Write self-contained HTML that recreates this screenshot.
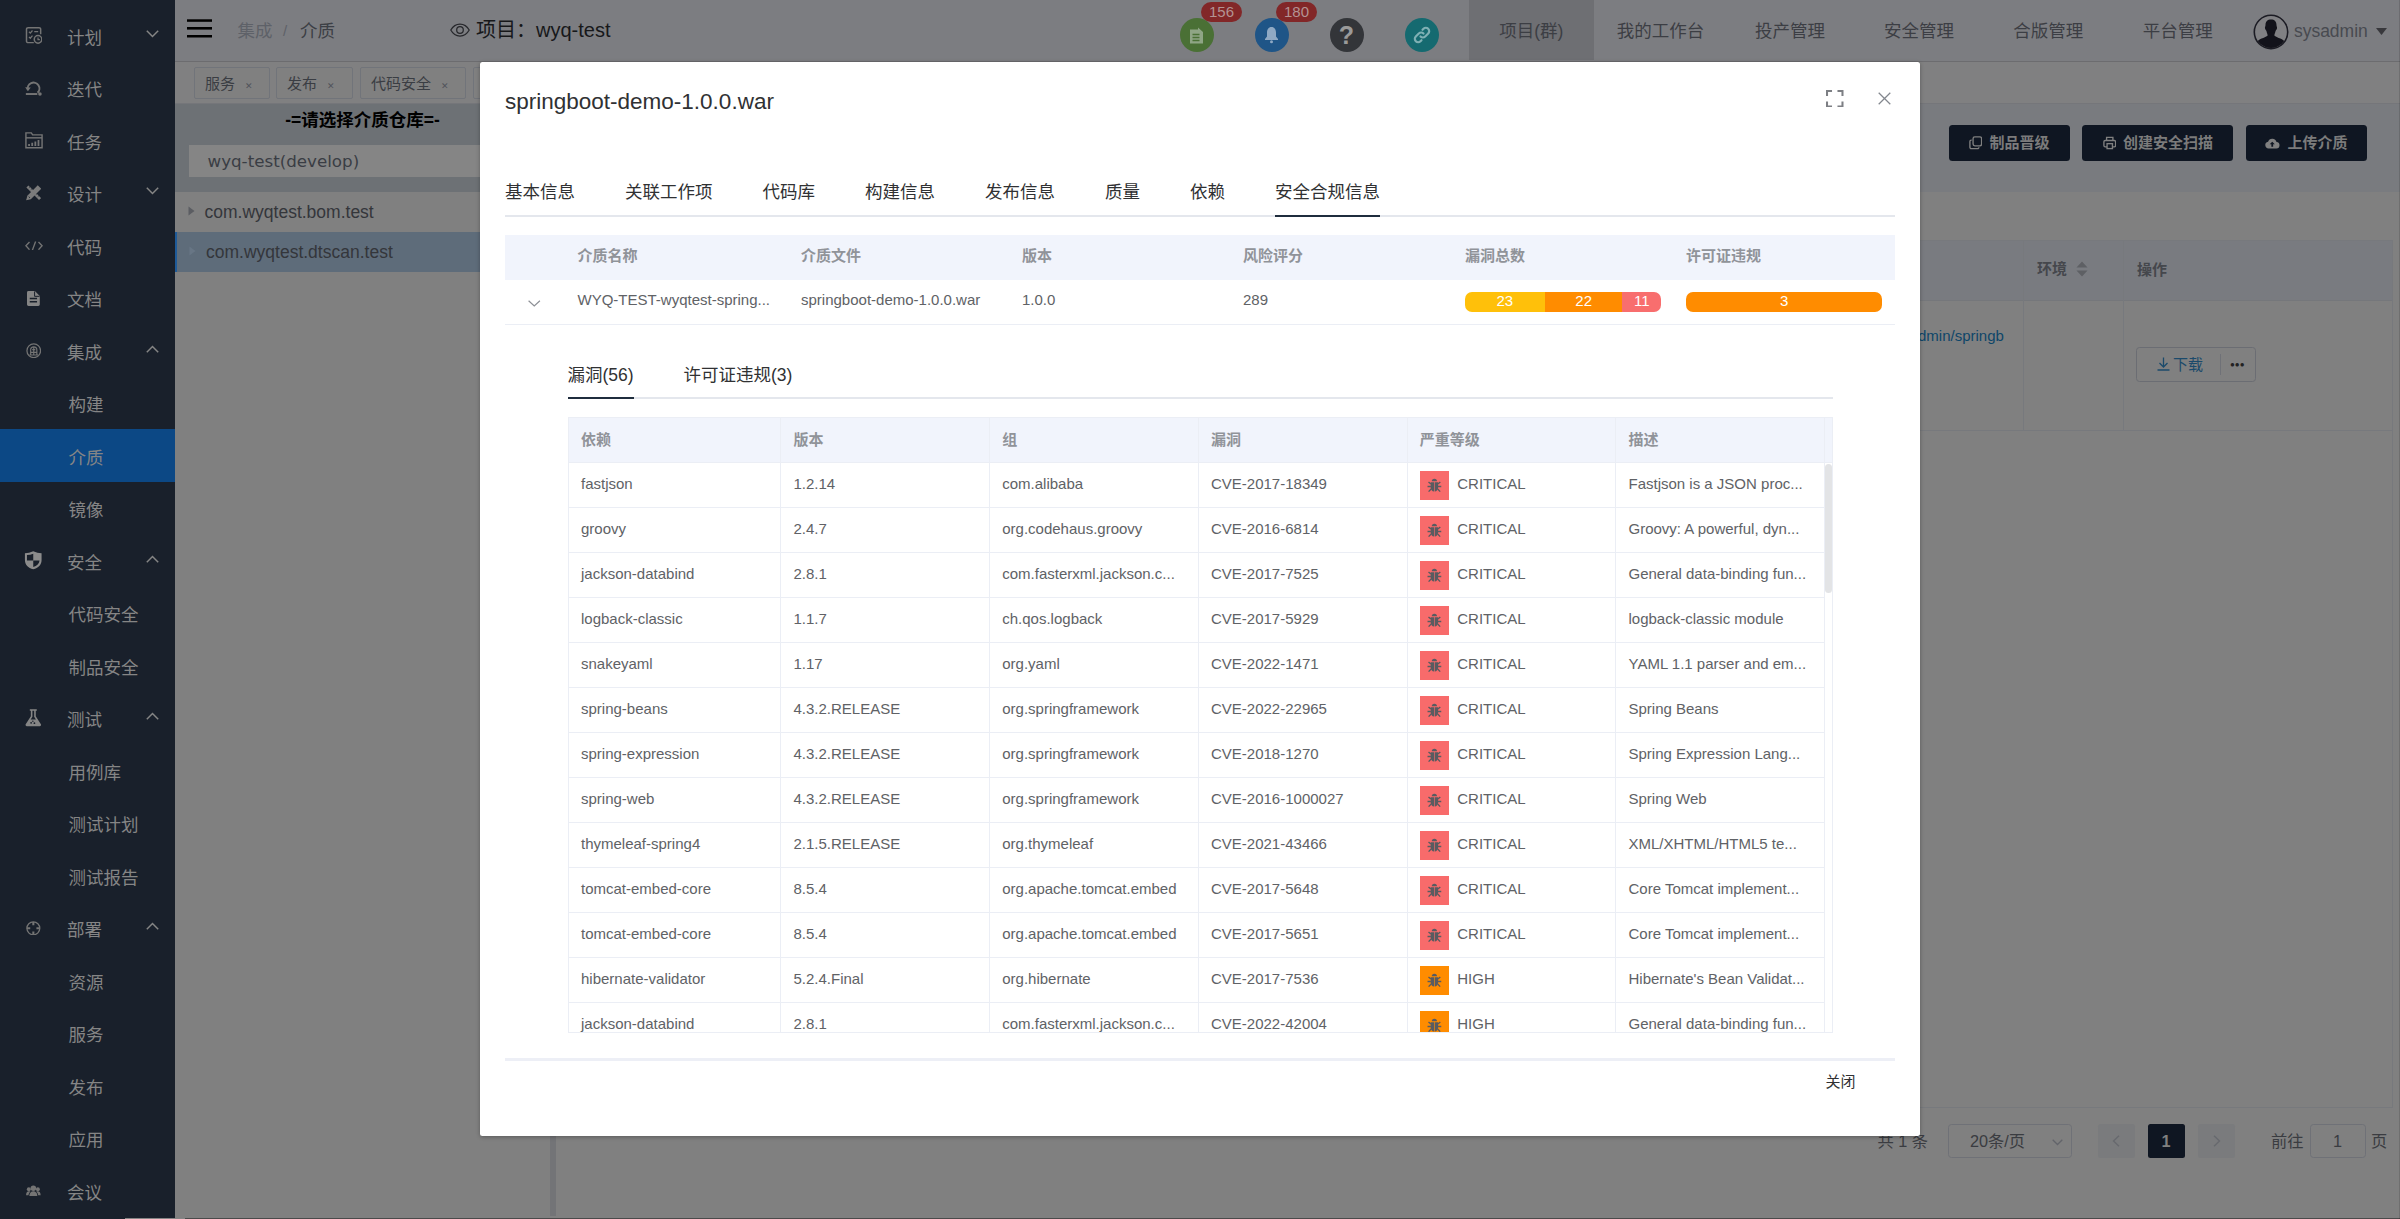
<!DOCTYPE html>
<html lang="zh-CN"><head><meta charset="utf-8"><title>介质</title>
<style>
*{box-sizing:border-box}
html,body{margin:0;padding:0}
body{width:2400px;height:1219px;position:relative;overflow:hidden;background:#808080;
 font-family:"Liberation Sans","Noto Sans CJK SC",sans-serif;font-size:17.5px;color:#303133;-webkit-font-smoothing:antialiased}
.abs{position:absolute}
/* sidebar */
#side{position:absolute;left:0;top:0;width:174.5px;height:1219px;background:#19202b}
.mi{position:absolute;left:0;width:174.5px;height:52.5px;line-height:52.5px;color:#858585;font-size:17.5px;white-space:nowrap}
.mi .t{position:absolute;left:67px;top:2.5px}
.mi.sub .t{left:68.5px}
.mi.act{background:#0c4885}
.mi svg.ic{position:absolute}
.mi svg.ar{position:absolute;left:146px;top:20.5px;width:13px;height:8px}
/* topbar */
#top{position:absolute;left:174.5px;top:0;width:2225.5px;height:62px;background:#7c7d81;border-bottom:1.5px solid #6c6c6f}
#top .nav{position:absolute;top:0;height:60px;line-height:62px;font-size:17.5px;color:#3c3e44;white-space:nowrap}
.circ{position:absolute;top:18px;width:34px;height:34px;border-radius:50%}
.bdg{position:absolute;top:1.8px;height:20px;line-height:20px;border-radius:10px;background:#822728;color:#b39393;font-size:15px;text-align:center;padding:0 7.5px}
/* tags bar */
#tags{position:absolute;left:174px;top:62px;width:2226px;height:41.5px;background:#808081;border-bottom:1px solid #75767a}
.tag{position:absolute;top:5px;height:32px;line-height:32px;border:1px solid #71747a;border-radius:2px;background:#808080;color:#3a3d43;font-size:15px;white-space:nowrap;padding-left:10px}
.tag i{font-style:normal;font-size:9px;color:#50535a;margin-left:10px;position:relative;top:-0.5px}
/* left panel */
#lband{position:absolute;left:174.5px;top:103.5px;width:376px;height:88px;background:#6d7175}
#ltitle{position:absolute;left:174.5px;top:106px;width:376px;text-align:center;font-weight:bold;font-size:17.5px;color:#000;line-height:28px}
#lsel{position:absolute;left:188.5px;top:145px;width:348px;height:32px;background:#858585;color:#3a3d44;font-size:16.7px;line-height:33px;padding-left:19px;font-family:"DejaVu Sans","Noto Sans CJK SC",sans-serif}
.tr{position:absolute;left:174.5px;width:376px;height:40px;line-height:40px;font-size:17.5px;color:#34363b;white-space:nowrap}
#split{position:absolute;left:550px;top:103.5px;width:5.5px;height:1112.5px;background:#737477}
/* right panel */
#rband{position:absolute;left:555.5px;top:103.5px;width:1844.5px;height:88px;background:#797b7f}
.dbtn{position:absolute;top:124.5px;height:36.5px;line-height:36px;background:#0f1622;color:#7b7b7b;font-weight:bold;font-size:15px;border-radius:3.5px;white-space:nowrap}
#rtable{position:absolute;left:568px;top:240px;width:1825px;height:868px;border:1px solid #77797d}
#rth{position:absolute;left:0;top:0;width:100%;height:59.5px;background:#797b80;border-bottom:1px solid #75777b}
.vl{position:absolute;top:0;width:1px;height:189px;background:#77797d}
#rrow{position:absolute;left:0;top:188.5px;width:100%;height:1px;background:#77797d}
/* modal */
#modal{position:absolute;left:480px;top:62px;width:1440px;height:1073.5px;background:#fff;border-radius:2.5px;box-shadow:0 1px 4px rgba(0,0,0,.3)}
#mtitle{position:absolute;left:25px;top:25px;font-size:22.5px;line-height:30px;color:#303133;white-space:nowrap}
.tabs{position:absolute;height:50px;border-bottom:2.5px solid #e4e7ed}
.tabs span{position:absolute;top:0;line-height:50px;font-size:17.5px;color:#303133;white-space:nowrap}
.tabs .bar{position:absolute;bottom:-2.5px;height:2.5px;background:#1f2d3d}
.th{position:absolute;font-size:15px;font-weight:bold;color:#909399;white-space:nowrap}
.td{position:absolute;font-size:15px;color:#606266;white-space:nowrap}
</style></head>
<body>
<div id="tags">
<span class="tag" style="left:20.0px;width:76.0px">服务<i>✕</i></span>
<span class="tag" style="left:102.0px;width:77.0px">发布<i>✕</i></span>
<span class="tag" style="left:186.0px;width:106.0px">代码安全<i>✕</i></span>
<span class="tag" style="left:299.0px;width:40px"></span>
</div>
<div id="lband"></div><div id="ltitle">-=请选择介质仓库=-</div><div id="lsel">wyq-test(develop)</div>
<div class="tr" style="top:191.5px"><svg class="abs" style="left:13px;top:14.500px;width:7px;height:10px" viewBox="0 0 7 10"><path d="M0.500 0.500l6 4.500-6 4.500z" fill="#5b5d62"/></svg><span class="abs" style="left:30px">com.wyqtest.bom.test</span></div>
<div class="tr" style="top:231.5px;background:#5e6c7a;border-left:2.500px solid #1e5a98"><svg class="abs" style="left:12px;top:14.500px;width:7px;height:10px" viewBox="0 0 7 10"><path d="M0.500 0.500l6 4.500-6 4.500z" fill="#687685"/></svg><span class="abs" style="left:29.500px">com.wyqtest.dtscan.test</span></div>
<div id="split"></div>
<div id="rband"></div>
<div class="dbtn" style="left:1948.7px;width:121.0px;text-align:center"><svg style="display:inline-block;vertical-align:-2px;margin-right:7px" width="13.500" height="13.500" viewBox="0 0 15 15" fill="none" stroke="#808080" stroke-width="1.500"><rect x="4.500" y="1" width="9.500" height="10" rx="2"/><path d="M3 4.500H2.500A1.500 1.500 0 0 0 1 6v6.500A1.500 1.500 0 0 0 2.500 14h7a1.500 1.500 0 0 0 1.500-1.500"/></svg>制品晋级</div>
<div class="dbtn" style="left:2082.3px;width:151.0px;text-align:center"><svg style="display:inline-block;vertical-align:-2px;margin-right:7px" width="13.500" height="13.500" viewBox="0 0 15 15" fill="none" stroke="#808080" stroke-width="1.500"><rect x="1" y="5" width="13" height="7" rx="1.500"/><path d="M4 5V1.500h7V5"/><rect x="4.500" y="8.500" width="6" height="5.500" fill="#0f1622"/></svg>创建安全扫描</div>
<div class="dbtn" style="left:2245.8px;width:121.0px;text-align:center"><svg style="display:inline-block;vertical-align:-1.500px;margin-right:8px" width="14.500" height="12" viewBox="0 0 16 13" fill="#808080"><path d="M4 12.500a3.700 3.700 0 0 1-.6-7.350A4.800 4.800 0 0 1 12.700 5.500 3.500 3.500 0 0 1 12.300 12.500z"/><path d="M8 5l2.800 3H9v2.500H7V8H5.200z" fill="#0f1622"/></svg>上传介质</div>
<div id="rtable"><div id="rth"></div><div class="vl" style="left:1454px"></div><div class="vl" style="left:1554px"></div><div id="rrow"></div>
<span class="abs" style="left:1468px;top:15.500px;font-size:15px;font-weight:bold;color:#45474c;line-height:24px">环境</span>
<svg class="abs" style="left:1507px;top:20px;width:12px;height:16px" viewBox="0 0 12 16"><path d="M6 0.500l5.500 6h-11zM6 15.500l5.500-6h-11z" fill="#5e6064"/></svg>
<span class="abs" style="left:1568px;top:17px;font-size:15px;font-weight:bold;color:#45474c;line-height:24px">操作</span>
<span class="abs" style="left:1349px;top:83px;font-size:15px;color:#0e4669;line-height:24px">dmin/springb</span>
<div class="abs" style="left:1567px;top:106px;width:119.500px;height:35px;border:1px solid #6b6d73;border-radius:3.500px"><svg class="abs" style="left:20px;top:9px;width:13px;height:14px" viewBox="0 0 13 14" fill="none" stroke="#1b4a6b" stroke-width="1.300"><path d="M6.500 0.500v9M2.500 6l4 4 4-4M0.500 13h12"/></svg><span class="abs" style="left:36px;top:0;font-size:15px;line-height:33px;color:#1b4a6b">下载</span><div class="abs" style="left:83px;top:6px;width:1px;height:21px;background:#6f7177"></div><span class="abs" style="left:93px;top:-0.500px;font-size:8px;line-height:33px;color:#222;letter-spacing:0px">●●●</span></div>
</div>
<span class="abs" style="left:1877.500px;top:1128px;font-size:16.250px;line-height:26px;color:#3a3c41">共 1 条</span>
<div class="abs" style="left:1948px;top:1123.500px;width:124px;height:34.500px;border:1px solid #6f7177;border-radius:3.500px"><span class="abs" style="left:21px;top:0;font-size:16.250px;line-height:33px;color:#3a3c41">20条/页</span><svg class="abs" style="left:103px;top:14px;width:11px;height:7px" viewBox="0 0 11 7" fill="none" stroke="#62646a" stroke-width="1.300"><path d="M0.700 0.700l4.800 4.800 4.800-4.800"/></svg></div>
<div class="abs" style="left:2097.500px;top:1123.500px;width:37px;height:34.500px;background:#7a7b7d;border-radius:2.500px"><svg class="abs" style="left:14px;top:11px;width:8px;height:12px" viewBox="0 0 8 12" fill="none" stroke="#67696e" stroke-width="1.400"><path d="M7 0.700L1.500 6 7 11.300"/></svg></div>
<div class="abs" style="left:2147.500px;top:1123.500px;width:37px;height:34.500px;background:#0f1622;border-radius:2.500px;color:#808080;font-weight:bold;font-size:16.250px;line-height:34.500px;text-align:center">1</div>
<div class="abs" style="left:2197.500px;top:1123.500px;width:37px;height:34.500px;background:#7a7b7d;border-radius:2.500px"><svg class="abs" style="left:15px;top:11px;width:8px;height:12px" viewBox="0 0 8 12" fill="none" stroke="#67696e" stroke-width="1.400"><path d="M1 0.700L6.500 6 1 11.300"/></svg></div>
<span class="abs" style="left:2271px;top:1128px;font-size:16.250px;line-height:26px;color:#3a3c41">前往</span>
<div class="abs" style="left:2309.500px;top:1123.500px;width:56px;height:34.500px;border:1px solid #6f7177;border-radius:3.500px;font-size:16.250px;line-height:32.500px;text-align:center;color:#3a3c41">1</div>
<span class="abs" style="left:2371px;top:1128px;font-size:16.250px;line-height:26px;color:#3a3c41">页</span>
<div id="top">
<svg class="abs" style="left:12.9px;top:19px;width:25px;height:19px" viewBox="0 0 25 19"><rect x="0" y="0.300" width="25" height="2.500" fill="#000"/><rect x="0" y="8" width="25" height="2.600" fill="#000"/><rect x="0" y="16" width="25" height="2.500" fill="#000"/></svg>
<span class="nav" style="left:62.9px;color:#5e6168">集成</span>
<span class="nav" style="left:108.5px;color:#5e6168;font-size:15px">/</span>
<span class="nav" style="left:125.5px;color:#3c3f45">介质</span>
<svg class="abs" style="left:275.5px;top:23px;width:20px;height:14px" viewBox="0 0 20 14" fill="none" stroke="#26272b" stroke-width="1.250"><path d="M0.800 7C3 3 6.300 1 10 1s7 2 9.200 6C17 11 13.700 13 10 13S3 11 0.800 7z"/><circle cx="10" cy="7" r="3.300"/></svg>
<span class="nav" style="left:301.5px;color:#17181a;font-size:20px;line-height:61.500px">项目：wyq-test</span>
<div class="circ" style="left:1005.0px;background:#4a7035"><svg class="abs" style="left:9.500px;top:8.500px;width:15px;height:17px" viewBox="0 0 15 17" fill="#8fa585"><path d="M1 2.500h8V0.500l5 4.500v11.500H1z"/><path d="M3.500 7.500h7M3.500 10.500h7M3.500 13.500h7" stroke="#4a7035" stroke-width="1.500"/></svg></div>
<div class="circ" style="left:1080.0px;background:#1f5587"><svg class="abs" style="left:9.500px;top:8px;width:15px;height:18px" viewBox="0 0 15 18" fill="#8fa9c4"><path d="M7.500 1C4.500 1 3 3.500 3 6.500v4L1 13v1h13v-1l-2-2.500v-4C12 3.500 10.500 1 7.500 1z"/><circle cx="7.500" cy="15.800" r="1.500"/></svg></div>
<div class="circ" style="left:1155.0px;background:#333539;color:#9a9a9a;font-weight:bold;font-size:25px;line-height:35px;text-align:center">?</div>
<div class="circ" style="left:1230.0px;background:#156a70"><svg class="abs" style="left:8px;top:8px;width:18px;height:18px" viewBox="0 0 18 18" fill="none" stroke="#7fb0b4" stroke-width="2.200" stroke-linecap="round"><path d="M7.500 10.500a3.300 3.300 0 0 0 4.700 0l3-3a3.300 3.300 0 0 0-4.700-4.700l-1 1"/><path d="M10.500 7.500a3.300 3.300 0 0 0-4.700 0l-3 3a3.300 3.300 0 0 0 4.700 4.700l1-1"/></svg></div>
<span class="bdg" style="left:1026.5px;width:41px;padding:0">156</span>
<span class="bdg" style="left:1101.5px;width:41px;padding:0">180</span>
<div class="abs" style="left:1294.5px;top:0;width:124.5px;height:60px;background:#6e6f73"></div>
<span class="nav" style="left:1324.8px">项目(群)</span>
<span class="nav" style="left:1442.2px">我的工作台</span>
<span class="nav" style="left:1580.5px">投产管理</span>
<span class="nav" style="left:1709.5px">安全管理</span>
<span class="nav" style="left:1838.8px">合版管理</span>
<span class="nav" style="left:1968.2px">平台管理</span>
<svg class="abs" style="left:2078.5px;top:14px;width:36px;height:36px" viewBox="0 0 36 36"><defs><clipPath id="avc"><circle cx="18" cy="18" r="16"/></clipPath></defs><circle cx="18" cy="18" r="16.700" fill="#808083" stroke="#1c1c24" stroke-width="1.600"/><g clip-path="url(#avc)" fill="#12121a"><path d="M12.500 11c0-3.500 2-5.500 5.500-5.500s5.500 2 5.500 5.500c0 1.500.8 2 .5 3.500-.3 1.300-1.200 1.500-1.500 2.800-.4 1.700-1 3-1.200 4 .8 2 7.700 3 10.200 6v8H4.500v-8c2.500-3 9.400-4 10.200-6-.2-1-.8-2.300-1.200-4-.3-1.300-1.200-1.500-1.500-2.800-.3-1.500.5-2 .5-3.500z"/></g></svg>
<span class="nav" style="left:2119.4px;color:#484a50">sysadmin</span>
<svg class="abs" style="left:2201.0px;top:28px;width:11px;height:7px" viewBox="0 0 11 7"><path d="M0 0h11L5.500 7z" fill="#38383c"/></svg>
</div>
<div id="side">
<div class="mi" style="top:9.25px"><svg class="ic" style="left:24.70px;top:17.10px;width:17.60px;height:18.30px" viewBox="0 0 20 20" fill="none" stroke="#747474" stroke-width="1.700"><path d="M10 18.500H3.500A1.800 1.800 0 0 1 1.700 16.700V3.300A1.800 1.800 0 0 1 3.500 1.500h12.500A1.800 1.800 0 0 1 17.800 3.300V9"/><path d="M4.500 6.200l1.500 1.500 2.500-3M10.500 6h4.500M4.500 12l1.500 1.500 2.500-3" stroke-width="1.400"/><circle cx="14.800" cy="14.800" r="4.300"/><path d="M14.800 12.600v2.400h2.100" stroke-width="1.400"/></svg><span class="t">计划</span><svg class="ar" viewBox="0 0 13 8" fill="none" stroke="#858585" stroke-width="1.500"><path d="M0.800 0.800l5.700 5.700 5.700-5.700"/></svg></div>
<div class="mi" style="top:61.75px"><svg class="ic" style="left:25.00px;top:18.75px;width:17.00px;height:15.00px" viewBox="0 0 20 17.600" fill="none" stroke="#747474"><path d="M3.400 10.500A6.900 6.900 0 1 1 14.800 13.800" stroke-width="2.300"/><path d="M1 15.300h13.500" stroke-width="2.300"/><path d="M0.200 7.300l3.200 4.600 3.400-4.200z" fill="#747474" stroke="none"/><circle cx="17.600" cy="15.300" r="2.100" fill="#747474" stroke="none"/></svg><span class="t">迭代</span></div>
<div class="mi" style="top:114.25px"><svg class="ic" style="left:24.50px;top:17.95px;width:18.00px;height:16.60px" viewBox="0 0 20 18.500" fill="none" stroke="#747474" stroke-width="1.600"><path d="M1 17.500V1h6l1.500 2.200H19V17.500z"/><path d="M1 6.500h18"/><path d="M4.500 15.500v-2M8 15.500v-3.500M11.500 15.500v-5M15 15.500v-6.500" stroke-width="2"/></svg><span class="t">任务</span></div>
<div class="mi" style="top:166.75px"><svg class="ic" style="left:25.75px;top:18.50px;width:15.50px;height:15.50px" viewBox="0 0 20 20" fill="#7c7c7c" stroke="none"><path d="M3.200 0.500L19.500 16.800 16.800 19.500 0.500 3.200z"/><path d="M15.200 0.300l4.500 4.500L6.200 18.300l-6 1.500 1.500-6z"/><path d="M3.500 15l1.500 1.500" stroke="#19202b" stroke-width="1.200"/><path d="M5 2.300l-1.300 1.300M7.500 4.800L6.200 6.100M14 11.300l-1.300 1.300M16.500 13.800l-1.300 1.300" stroke="#19202b" stroke-width="1"/></svg><span class="t">设计</span><svg class="ar" viewBox="0 0 13 8" fill="none" stroke="#858585" stroke-width="1.500"><path d="M0.800 0.800l5.700 5.700 5.700-5.700"/></svg></div>
<div class="mi" style="top:219.25px"><svg class="ic" style="left:24.50px;top:21.45px;width:18.00px;height:9.60px" viewBox="0 0 20 10.600" fill="none" stroke="#747474" stroke-width="1.500"><path d="M5 1L1 5.300l4 4.300M15 1l4 4.300-4 4.300M11.800 0.500L8.200 10.100"/></svg><span class="t">代码</span></div>
<div class="mi" style="top:271.75px"><svg class="ic" style="left:27.10px;top:18.75px;width:12.80px;height:15.00px" viewBox="0 0 13 15" fill="#858585" stroke="none"><path d="M1.500 0h6.500l5 5v8.500a1.500 1.500 0 0 1-1.500 1.500H1.500A1.500 1.500 0 0 1 0 13.500V1.500A1.500 1.500 0 0 1 1.500 0z"/><path d="M2.800 7.500h7.400M2.800 10.700h7.400" stroke="#19202b" stroke-width="1.500"/><path d="M7.700 0.300V5.300h5" stroke="#19202b" stroke-width="1" fill="none"/></svg><span class="t">文档</span></div>
<div class="mi" style="top:324.25px"><svg class="ic" style="left:25.75px;top:18.50px;width:15.50px;height:15.50px" viewBox="0 0 20 20" fill="none" stroke="#747474" stroke-width="1.600"><circle cx="10" cy="10" r="8.800"/><path d="M6 15.500V9a4 4 0 0 1 8 0v6.500M6 12h8M10 5v10.500M4.300 15.500h11.400M8 8.500h4" stroke-width="1.500"/></svg><span class="t">集成</span><svg class="ar" viewBox="0 0 13 8" fill="none" stroke="#858585" stroke-width="1.500"><path d="M0.800 7.200l5.700-5.700 5.700 5.700"/></svg></div>
<div class="mi sub" style="top:376.75px"><span class="t">构建</span></div>
<div class="mi sub act" style="top:429.25px"><span class="t">介质</span></div>
<div class="mi sub" style="top:481.75px"><span class="t">镜像</span></div>
<div class="mi" style="top:534.25px"><svg class="ic" style="left:24.25px;top:16.90px;width:18.50px;height:18.70px" viewBox="0 0 20 20" fill="#8c8c8c" stroke="none"><path d="M10 0.300C7 1.800 4 2.300 1 2.300v7.200c0 5 3.500 8.700 9 10.200 5.500-1.500 9-5.200 9-10.200V2.300c-3 0-6-.5-9-2z"/><path d="M10 2.800v7.400H3.200V4.300c2.500-.1 4.800-.6 6.800-1.500z" fill="#19202b"/><path d="M10 10.200h6.800c-.3 3.300-2.800 5.700-6.800 7.100z" fill="#19202b"/></svg><span class="t">安全</span><svg class="ar" viewBox="0 0 13 8" fill="none" stroke="#858585" stroke-width="1.500"><path d="M0.800 7.200l5.700-5.700 5.700 5.700"/></svg></div>
<div class="mi sub" style="top:586.75px"><span class="t">代码安全</span></div>
<div class="mi sub" style="top:639.25px"><span class="t">制品安全</span></div>
<div class="mi" style="top:691.75px"><svg class="ic" style="left:25.20px;top:17.50px;width:16.60px;height:17.50px" viewBox="0 0 19 20" fill="#858585" stroke="none"><path d="M5.500 0.300h8v1.800h-1.200v6.200L18.200 17.500a1.500 1.500 0 0 1-1.300 2.200H2.100a1.500 1.500 0 0 1-1.300-2.200L6.700 8.300V2.100H5.500z"/><path d="M8.500 2.100h2v6.700l2 3.200h-6l2-3.200z" fill="#19202b"/><circle cx="7" cy="15.800" r="1" fill="#19202b"/><circle cx="10.800" cy="16.200" r="1" fill="#19202b"/><circle cx="9" cy="14" r=".8" fill="#19202b"/></svg><span class="t">测试</span><svg class="ar" viewBox="0 0 13 8" fill="none" stroke="#858585" stroke-width="1.500"><path d="M0.800 7.200l5.700-5.700 5.700 5.700"/></svg></div>
<div class="mi sub" style="top:744.25px"><span class="t">用例库</span></div>
<div class="mi sub" style="top:796.75px"><span class="t">测试计划</span></div>
<div class="mi sub" style="top:849.25px"><span class="t">测试报告</span></div>
<div class="mi" style="top:901.75px"><svg class="ic" style="left:26.15px;top:18.90px;width:14.70px;height:14.70px" viewBox="0 0 20 20" fill="none" stroke="#747474" stroke-width="1.700"><circle cx="10" cy="10" r="8.800"/><path d="M10 1.200v4.600M10 14.200v4.600M1.200 10h4.600M14.200 10h4.600" stroke-width="2.800"/></svg><span class="t">部署</span><svg class="ar" viewBox="0 0 13 8" fill="none" stroke="#858585" stroke-width="1.500"><path d="M0.800 7.200l5.700-5.700 5.700 5.700"/></svg></div>
<div class="mi sub" style="top:954.25px"><span class="t">资源</span></div>
<div class="mi sub" style="top:1006.75px"><span class="t">服务</span></div>
<div class="mi sub" style="top:1059.25px"><span class="t">发布</span></div>
<div class="mi sub" style="top:1111.75px"><span class="t">应用</span></div>
<div class="mi" style="top:1164.25px"><svg class="ic" style="left:26.15px;top:20.40px;width:14.70px;height:11.70px" viewBox="0 0 20 16" fill="#747474" stroke="none"><circle cx="10" cy="4.500" r="3.800"/><circle cx="3.800" cy="5.800" r="2.700"/><circle cx="16.200" cy="5.800" r="2.700"/><path d="M4.500 15.500c0-4.500 2.300-6.800 5.500-6.800s5.500 2.300 5.500 6.800z"/><path d="M0 14c0-3.500 1.500-5.300 4-5.300.8 0 1.500.2 2 .6-1.700 1.200-2.400 2.700-2.600 4.700zM20 14c0-3.500-1.500-5.300-4-5.300-.8 0-1.500.2-2 .6 1.700 1.200 2.400 2.700 2.600 4.700z"/></svg><span class="t">会议</span></div>
</div>
<div id="modal">
<div id="mtitle">springboot-demo-1.0.0.war</div>
<svg class="abs" style="left:1346px;top:27.500px;width:17.500px;height:17.500px" viewBox="0 0 18 18" fill="none" stroke="#7d7f84" stroke-width="2.100"><path d="M1.050 6.200V1.050H6.200M11.800 1.050h5.150V6.200M16.950 11.800v5.150H11.800M6.200 16.950H1.050V11.800"/></svg>
<svg class="abs" style="left:1398px;top:30px;width:13px;height:13px" viewBox="0 0 13 13" fill="none" stroke="#83878e" stroke-width="1.250"><path d="M0.700 0.700l11.600 11.600M12.300 0.700L0.700 12.300"/></svg>
<div class="tabs" style="left:25px;top:104.500px;width:1390px">
<span style="left:0.0px">基本信息</span>
<span style="left:120.0px">关联工作项</span>
<span style="left:257.5px">代码库</span>
<span style="left:360.0px">构建信息</span>
<span style="left:480.0px">发布信息</span>
<span style="left:600.0px">质量</span>
<span style="left:685.0px">依赖</span>
<span style="left:770.0px">安全合规信息</span>
<div class="bar" style="left:770px;width:105px"></div></div>
<div class="abs" style="left:25px;top:173px;width:1390px;height:44.500px;background:#f1f4fc"></div>
<span class="th" style="left:97.5px;top:171.500px;line-height:44.500px">介质名称</span>
<span class="th" style="left:321.0px;top:171.500px;line-height:44.500px">介质文件</span>
<span class="th" style="left:542.0px;top:171.500px;line-height:44.500px">版本</span>
<span class="th" style="left:763.0px;top:171.500px;line-height:44.500px">风险评分</span>
<span class="th" style="left:985.0px;top:171.500px;line-height:44.500px">漏洞总数</span>
<span class="th" style="left:1206.0px;top:171.500px;line-height:44.500px">许可证违规</span>
<div class="abs" style="left:25px;top:261.500px;width:1390px;height:1px;background:#ebeef5"></div>
<svg class="abs" style="left:48px;top:237.700px;width:12.500px;height:7px" viewBox="0 0 12.500 7" fill="none" stroke="#8d9096" stroke-width="1.200"><path d="M0.600 0.800l5.650 5.200 5.650-5.200"/></svg>
<span class="td" style="left:97.5px;top:215.500px;line-height:43px">WYQ-TEST-wyqtest-spring...</span>
<span class="td" style="left:321.0px;top:215.500px;line-height:43px">springboot-demo-1.0.0.war</span>
<span class="td" style="left:542.0px;top:215.500px;line-height:43px">1.0.0</span>
<span class="td" style="left:763.0px;top:215.500px;line-height:43px">289</span>
<div class="abs" style="left:984.800px;top:230px;width:196.200px;height:20px;border-radius:7px;overflow:hidden;color:#fff;font-size:15px;line-height:17.500px;text-align:center;white-space:nowrap"><span class="abs" style="left:0;top:0;width:80px;height:20px;background:#ffc00a">23</span><span class="abs" style="left:80px;top:0;width:77.700px;height:20px;background:#ff8c00">22</span><span class="abs" style="left:157.700px;top:0;width:38.500px;height:20px;background:#f86e6e">11</span></div>
<div class="abs" style="left:1206px;top:230px;width:196.400px;height:20px;border-radius:7px;background:#ff8c00;color:#fff;font-size:15px;line-height:17.500px;text-align:center">3</div>
<div class="tabs" style="left:87.500px;top:286.500px;width:1265px"><span style="left:0;top:1px">漏洞(56)</span><span style="left:116px;top:1px">许可证违规(3)</span><div class="bar" style="left:0;width:66.500px"></div></div>
<div class="abs" style="left:87.5px;top:355.0px;width:1265px;height:616.0px;border:1px solid #ebeef5;overflow:hidden">
<div class="abs" style="left:0;top:0;width:1265px;height:45px;background:#f1f4fc;border-bottom:1px solid #ebeef5"></div>
<div class="abs" style="left:211.90px;top:0;width:1px;height:620px;background:#ebeef5"></div>
<div class="abs" style="left:420.65px;top:0;width:1px;height:620px;background:#ebeef5"></div>
<div class="abs" style="left:629.40px;top:0;width:1px;height:620px;background:#ebeef5"></div>
<div class="abs" style="left:838.15px;top:0;width:1px;height:620px;background:#ebeef5"></div>
<div class="abs" style="left:1046.90px;top:0;width:1px;height:620px;background:#ebeef5"></div>
<div class="abs" style="left:1255.65px;top:0;width:1px;height:620px;background:#ebeef5"></div>
<span class="th" style="left:12.50px;top:-0.500px;line-height:44px">依赖</span>
<span class="th" style="left:225.00px;top:-0.500px;line-height:44px">版本</span>
<span class="th" style="left:433.75px;top:-0.500px;line-height:44px">组</span>
<span class="th" style="left:642.50px;top:-0.500px;line-height:44px">漏洞</span>
<span class="th" style="left:851.25px;top:-0.500px;line-height:44px">严重等级</span>
<span class="th" style="left:1060.00px;top:-0.500px;line-height:44px">描述</span>
<div class="abs" style="left:0;top:89.0px;width:1256px;height:1px;background:#ebeef5"></div>
<span class="td" style="left:12.50px;top:44.25px;line-height:43px">fastjson</span>
<span class="td" style="left:225.00px;top:44.25px;line-height:43px">1.2.14</span>
<span class="td" style="left:433.75px;top:44.25px;line-height:43px">com.alibaba</span>
<span class="td" style="left:642.50px;top:44.25px;line-height:43px">CVE-2017-18349</span>
<div class="abs" style="left:851.25px;top:53.0px;width:28.750px;height:28.500px;background:#f86b6b"><svg class="abs" style="left:7.300px;top:6.600px;width:14.800px;height:15.300px" viewBox="0 0 14 14.500"><g fill="#595b60"><path d="M4.500 3a2.500 2.400 0 0 1 5 0z"/><path d="M3.500 4h3.200v8.800c-1.900-.2-3.200-1.800-3.200-3.600zM7.300 4h3.200v5.200c0 1.800-1.300 3.400-3.200 3.600z"/></g><g fill="none" stroke="#595b60" stroke-width="1.300"><path d="M3.700 5.700L1.400 3.700M10.300 5.700l2.300-2M3.700 8.100H0.500M10.300 8.100h3.200M3.900 10.400l-2.400 2.500M10.100 10.400l2.400 2.500"/></g></svg></div>
<span class="td" style="left:888.75px;top:44.25px;line-height:43px">CRITICAL</span>
<span class="td" style="left:1060.00px;top:44.25px;line-height:43px">Fastjson is a JSON proc...</span>
<div class="abs" style="left:0;top:134.0px;width:1256px;height:1px;background:#ebeef5"></div>
<span class="td" style="left:12.50px;top:89.25px;line-height:43px">groovy</span>
<span class="td" style="left:225.00px;top:89.25px;line-height:43px">2.4.7</span>
<span class="td" style="left:433.75px;top:89.25px;line-height:43px">org.codehaus.groovy</span>
<span class="td" style="left:642.50px;top:89.25px;line-height:43px">CVE-2016-6814</span>
<div class="abs" style="left:851.25px;top:98.0px;width:28.750px;height:28.500px;background:#f86b6b"><svg class="abs" style="left:7.300px;top:6.600px;width:14.800px;height:15.300px" viewBox="0 0 14 14.500"><g fill="#595b60"><path d="M4.500 3a2.500 2.400 0 0 1 5 0z"/><path d="M3.500 4h3.200v8.800c-1.900-.2-3.200-1.800-3.200-3.600zM7.300 4h3.200v5.200c0 1.800-1.300 3.400-3.200 3.600z"/></g><g fill="none" stroke="#595b60" stroke-width="1.300"><path d="M3.700 5.700L1.400 3.700M10.300 5.700l2.300-2M3.700 8.100H0.500M10.300 8.100h3.200M3.900 10.400l-2.400 2.500M10.100 10.400l2.400 2.500"/></g></svg></div>
<span class="td" style="left:888.75px;top:89.25px;line-height:43px">CRITICAL</span>
<span class="td" style="left:1060.00px;top:89.25px;line-height:43px">Groovy: A powerful, dyn...</span>
<div class="abs" style="left:0;top:179.0px;width:1256px;height:1px;background:#ebeef5"></div>
<span class="td" style="left:12.50px;top:134.25px;line-height:43px">jackson-databind</span>
<span class="td" style="left:225.00px;top:134.25px;line-height:43px">2.8.1</span>
<span class="td" style="left:433.75px;top:134.25px;line-height:43px">com.fasterxml.jackson.c...</span>
<span class="td" style="left:642.50px;top:134.25px;line-height:43px">CVE-2017-7525</span>
<div class="abs" style="left:851.25px;top:143.0px;width:28.750px;height:28.500px;background:#f86b6b"><svg class="abs" style="left:7.300px;top:6.600px;width:14.800px;height:15.300px" viewBox="0 0 14 14.500"><g fill="#595b60"><path d="M4.500 3a2.500 2.400 0 0 1 5 0z"/><path d="M3.500 4h3.200v8.800c-1.900-.2-3.200-1.800-3.200-3.600zM7.300 4h3.200v5.200c0 1.800-1.300 3.400-3.200 3.600z"/></g><g fill="none" stroke="#595b60" stroke-width="1.300"><path d="M3.700 5.700L1.400 3.700M10.300 5.700l2.300-2M3.700 8.100H0.500M10.300 8.100h3.200M3.900 10.400l-2.400 2.500M10.100 10.400l2.400 2.500"/></g></svg></div>
<span class="td" style="left:888.75px;top:134.25px;line-height:43px">CRITICAL</span>
<span class="td" style="left:1060.00px;top:134.25px;line-height:43px">General data-binding fun...</span>
<div class="abs" style="left:0;top:224.0px;width:1256px;height:1px;background:#ebeef5"></div>
<span class="td" style="left:12.50px;top:179.25px;line-height:43px">logback-classic</span>
<span class="td" style="left:225.00px;top:179.25px;line-height:43px">1.1.7</span>
<span class="td" style="left:433.75px;top:179.25px;line-height:43px">ch.qos.logback</span>
<span class="td" style="left:642.50px;top:179.25px;line-height:43px">CVE-2017-5929</span>
<div class="abs" style="left:851.25px;top:188.0px;width:28.750px;height:28.500px;background:#f86b6b"><svg class="abs" style="left:7.300px;top:6.600px;width:14.800px;height:15.300px" viewBox="0 0 14 14.500"><g fill="#595b60"><path d="M4.500 3a2.500 2.400 0 0 1 5 0z"/><path d="M3.500 4h3.200v8.800c-1.900-.2-3.200-1.800-3.200-3.600zM7.300 4h3.200v5.200c0 1.800-1.300 3.400-3.200 3.600z"/></g><g fill="none" stroke="#595b60" stroke-width="1.300"><path d="M3.700 5.700L1.400 3.700M10.300 5.700l2.300-2M3.700 8.100H0.500M10.300 8.100h3.200M3.900 10.400l-2.400 2.500M10.100 10.400l2.400 2.500"/></g></svg></div>
<span class="td" style="left:888.75px;top:179.25px;line-height:43px">CRITICAL</span>
<span class="td" style="left:1060.00px;top:179.25px;line-height:43px">logback-classic module</span>
<div class="abs" style="left:0;top:269.0px;width:1256px;height:1px;background:#ebeef5"></div>
<span class="td" style="left:12.50px;top:224.25px;line-height:43px">snakeyaml</span>
<span class="td" style="left:225.00px;top:224.25px;line-height:43px">1.17</span>
<span class="td" style="left:433.75px;top:224.25px;line-height:43px">org.yaml</span>
<span class="td" style="left:642.50px;top:224.25px;line-height:43px">CVE-2022-1471</span>
<div class="abs" style="left:851.25px;top:233.0px;width:28.750px;height:28.500px;background:#f86b6b"><svg class="abs" style="left:7.300px;top:6.600px;width:14.800px;height:15.300px" viewBox="0 0 14 14.500"><g fill="#595b60"><path d="M4.500 3a2.500 2.400 0 0 1 5 0z"/><path d="M3.500 4h3.200v8.800c-1.900-.2-3.200-1.800-3.200-3.600zM7.300 4h3.200v5.200c0 1.800-1.300 3.400-3.200 3.600z"/></g><g fill="none" stroke="#595b60" stroke-width="1.300"><path d="M3.700 5.700L1.400 3.700M10.300 5.700l2.300-2M3.700 8.100H0.500M10.300 8.100h3.200M3.900 10.400l-2.400 2.500M10.100 10.400l2.400 2.500"/></g></svg></div>
<span class="td" style="left:888.75px;top:224.25px;line-height:43px">CRITICAL</span>
<span class="td" style="left:1060.00px;top:224.25px;line-height:43px">YAML 1.1 parser and em...</span>
<div class="abs" style="left:0;top:314.0px;width:1256px;height:1px;background:#ebeef5"></div>
<span class="td" style="left:12.50px;top:269.25px;line-height:43px">spring-beans</span>
<span class="td" style="left:225.00px;top:269.25px;line-height:43px">4.3.2.RELEASE</span>
<span class="td" style="left:433.75px;top:269.25px;line-height:43px">org.springframework</span>
<span class="td" style="left:642.50px;top:269.25px;line-height:43px">CVE-2022-22965</span>
<div class="abs" style="left:851.25px;top:278.0px;width:28.750px;height:28.500px;background:#f86b6b"><svg class="abs" style="left:7.300px;top:6.600px;width:14.800px;height:15.300px" viewBox="0 0 14 14.500"><g fill="#595b60"><path d="M4.500 3a2.500 2.400 0 0 1 5 0z"/><path d="M3.500 4h3.200v8.800c-1.900-.2-3.200-1.800-3.200-3.600zM7.300 4h3.200v5.200c0 1.800-1.300 3.400-3.200 3.600z"/></g><g fill="none" stroke="#595b60" stroke-width="1.300"><path d="M3.700 5.700L1.400 3.700M10.300 5.700l2.300-2M3.700 8.100H0.500M10.300 8.100h3.200M3.900 10.400l-2.400 2.500M10.100 10.400l2.400 2.500"/></g></svg></div>
<span class="td" style="left:888.75px;top:269.25px;line-height:43px">CRITICAL</span>
<span class="td" style="left:1060.00px;top:269.25px;line-height:43px">Spring Beans</span>
<div class="abs" style="left:0;top:359.0px;width:1256px;height:1px;background:#ebeef5"></div>
<span class="td" style="left:12.50px;top:314.25px;line-height:43px">spring-expression</span>
<span class="td" style="left:225.00px;top:314.25px;line-height:43px">4.3.2.RELEASE</span>
<span class="td" style="left:433.75px;top:314.25px;line-height:43px">org.springframework</span>
<span class="td" style="left:642.50px;top:314.25px;line-height:43px">CVE-2018-1270</span>
<div class="abs" style="left:851.25px;top:323.0px;width:28.750px;height:28.500px;background:#f86b6b"><svg class="abs" style="left:7.300px;top:6.600px;width:14.800px;height:15.300px" viewBox="0 0 14 14.500"><g fill="#595b60"><path d="M4.500 3a2.500 2.400 0 0 1 5 0z"/><path d="M3.500 4h3.200v8.800c-1.900-.2-3.200-1.800-3.200-3.600zM7.300 4h3.200v5.200c0 1.800-1.300 3.400-3.200 3.600z"/></g><g fill="none" stroke="#595b60" stroke-width="1.300"><path d="M3.700 5.700L1.400 3.700M10.300 5.700l2.300-2M3.700 8.100H0.500M10.300 8.100h3.200M3.900 10.400l-2.400 2.500M10.100 10.400l2.400 2.500"/></g></svg></div>
<span class="td" style="left:888.75px;top:314.25px;line-height:43px">CRITICAL</span>
<span class="td" style="left:1060.00px;top:314.25px;line-height:43px">Spring Expression Lang...</span>
<div class="abs" style="left:0;top:404.0px;width:1256px;height:1px;background:#ebeef5"></div>
<span class="td" style="left:12.50px;top:359.25px;line-height:43px">spring-web</span>
<span class="td" style="left:225.00px;top:359.25px;line-height:43px">4.3.2.RELEASE</span>
<span class="td" style="left:433.75px;top:359.25px;line-height:43px">org.springframework</span>
<span class="td" style="left:642.50px;top:359.25px;line-height:43px">CVE-2016-1000027</span>
<div class="abs" style="left:851.25px;top:368.0px;width:28.750px;height:28.500px;background:#f86b6b"><svg class="abs" style="left:7.300px;top:6.600px;width:14.800px;height:15.300px" viewBox="0 0 14 14.500"><g fill="#595b60"><path d="M4.500 3a2.500 2.400 0 0 1 5 0z"/><path d="M3.500 4h3.200v8.800c-1.900-.2-3.200-1.800-3.200-3.600zM7.300 4h3.200v5.200c0 1.800-1.300 3.400-3.200 3.600z"/></g><g fill="none" stroke="#595b60" stroke-width="1.300"><path d="M3.700 5.700L1.400 3.700M10.300 5.700l2.300-2M3.700 8.100H0.500M10.300 8.100h3.200M3.900 10.400l-2.400 2.500M10.100 10.400l2.400 2.500"/></g></svg></div>
<span class="td" style="left:888.75px;top:359.25px;line-height:43px">CRITICAL</span>
<span class="td" style="left:1060.00px;top:359.25px;line-height:43px">Spring Web</span>
<div class="abs" style="left:0;top:449.0px;width:1256px;height:1px;background:#ebeef5"></div>
<span class="td" style="left:12.50px;top:404.25px;line-height:43px">thymeleaf-spring4</span>
<span class="td" style="left:225.00px;top:404.25px;line-height:43px">2.1.5.RELEASE</span>
<span class="td" style="left:433.75px;top:404.25px;line-height:43px">org.thymeleaf</span>
<span class="td" style="left:642.50px;top:404.25px;line-height:43px">CVE-2021-43466</span>
<div class="abs" style="left:851.25px;top:413.0px;width:28.750px;height:28.500px;background:#f86b6b"><svg class="abs" style="left:7.300px;top:6.600px;width:14.800px;height:15.300px" viewBox="0 0 14 14.500"><g fill="#595b60"><path d="M4.500 3a2.500 2.400 0 0 1 5 0z"/><path d="M3.500 4h3.200v8.800c-1.900-.2-3.200-1.800-3.200-3.600zM7.300 4h3.200v5.200c0 1.800-1.300 3.400-3.200 3.600z"/></g><g fill="none" stroke="#595b60" stroke-width="1.300"><path d="M3.700 5.700L1.400 3.700M10.300 5.700l2.300-2M3.700 8.100H0.500M10.300 8.100h3.200M3.900 10.400l-2.400 2.500M10.100 10.400l2.400 2.500"/></g></svg></div>
<span class="td" style="left:888.75px;top:404.25px;line-height:43px">CRITICAL</span>
<span class="td" style="left:1060.00px;top:404.25px;line-height:43px">XML/XHTML/HTML5 te...</span>
<div class="abs" style="left:0;top:494.0px;width:1256px;height:1px;background:#ebeef5"></div>
<span class="td" style="left:12.50px;top:449.25px;line-height:43px">tomcat-embed-core</span>
<span class="td" style="left:225.00px;top:449.25px;line-height:43px">8.5.4</span>
<span class="td" style="left:433.75px;top:449.25px;line-height:43px">org.apache.tomcat.embed</span>
<span class="td" style="left:642.50px;top:449.25px;line-height:43px">CVE-2017-5648</span>
<div class="abs" style="left:851.25px;top:458.0px;width:28.750px;height:28.500px;background:#f86b6b"><svg class="abs" style="left:7.300px;top:6.600px;width:14.800px;height:15.300px" viewBox="0 0 14 14.500"><g fill="#595b60"><path d="M4.500 3a2.500 2.400 0 0 1 5 0z"/><path d="M3.500 4h3.200v8.800c-1.900-.2-3.200-1.800-3.200-3.600zM7.300 4h3.200v5.200c0 1.800-1.300 3.400-3.200 3.600z"/></g><g fill="none" stroke="#595b60" stroke-width="1.300"><path d="M3.700 5.700L1.400 3.700M10.300 5.700l2.300-2M3.700 8.100H0.500M10.300 8.100h3.200M3.900 10.400l-2.400 2.500M10.100 10.400l2.400 2.500"/></g></svg></div>
<span class="td" style="left:888.75px;top:449.25px;line-height:43px">CRITICAL</span>
<span class="td" style="left:1060.00px;top:449.25px;line-height:43px">Core Tomcat implement...</span>
<div class="abs" style="left:0;top:539.0px;width:1256px;height:1px;background:#ebeef5"></div>
<span class="td" style="left:12.50px;top:494.25px;line-height:43px">tomcat-embed-core</span>
<span class="td" style="left:225.00px;top:494.25px;line-height:43px">8.5.4</span>
<span class="td" style="left:433.75px;top:494.25px;line-height:43px">org.apache.tomcat.embed</span>
<span class="td" style="left:642.50px;top:494.25px;line-height:43px">CVE-2017-5651</span>
<div class="abs" style="left:851.25px;top:503.0px;width:28.750px;height:28.500px;background:#f86b6b"><svg class="abs" style="left:7.300px;top:6.600px;width:14.800px;height:15.300px" viewBox="0 0 14 14.500"><g fill="#595b60"><path d="M4.500 3a2.500 2.400 0 0 1 5 0z"/><path d="M3.500 4h3.200v8.800c-1.900-.2-3.200-1.800-3.200-3.600zM7.300 4h3.200v5.200c0 1.800-1.300 3.400-3.200 3.600z"/></g><g fill="none" stroke="#595b60" stroke-width="1.300"><path d="M3.700 5.700L1.400 3.700M10.300 5.700l2.300-2M3.700 8.100H0.500M10.300 8.100h3.200M3.900 10.400l-2.400 2.500M10.100 10.400l2.400 2.500"/></g></svg></div>
<span class="td" style="left:888.75px;top:494.25px;line-height:43px">CRITICAL</span>
<span class="td" style="left:1060.00px;top:494.25px;line-height:43px">Core Tomcat implement...</span>
<div class="abs" style="left:0;top:584.0px;width:1256px;height:1px;background:#ebeef5"></div>
<span class="td" style="left:12.50px;top:539.25px;line-height:43px">hibernate-validator</span>
<span class="td" style="left:225.00px;top:539.25px;line-height:43px">5.2.4.Final</span>
<span class="td" style="left:433.75px;top:539.25px;line-height:43px">org.hibernate</span>
<span class="td" style="left:642.50px;top:539.25px;line-height:43px">CVE-2017-7536</span>
<div class="abs" style="left:851.25px;top:548.0px;width:28.750px;height:28.500px;background:#ff8c00"><svg class="abs" style="left:7.300px;top:6.600px;width:14.800px;height:15.300px" viewBox="0 0 14 14.500"><g fill="#595b60"><path d="M4.500 3a2.500 2.400 0 0 1 5 0z"/><path d="M3.500 4h3.200v8.800c-1.900-.2-3.200-1.800-3.200-3.600zM7.300 4h3.200v5.200c0 1.800-1.300 3.400-3.200 3.600z"/></g><g fill="none" stroke="#595b60" stroke-width="1.300"><path d="M3.700 5.700L1.400 3.700M10.300 5.700l2.300-2M3.700 8.100H0.500M10.300 8.100h3.200M3.900 10.400l-2.400 2.500M10.100 10.400l2.400 2.500"/></g></svg></div>
<span class="td" style="left:888.75px;top:539.25px;line-height:43px">HIGH</span>
<span class="td" style="left:1060.00px;top:539.25px;line-height:43px">Hibernate's Bean Validat...</span>
<div class="abs" style="left:0;top:629.0px;width:1256px;height:1px;background:#ebeef5"></div>
<span class="td" style="left:12.50px;top:584.25px;line-height:43px">jackson-databind</span>
<span class="td" style="left:225.00px;top:584.25px;line-height:43px">2.8.1</span>
<span class="td" style="left:433.75px;top:584.25px;line-height:43px">com.fasterxml.jackson.c...</span>
<span class="td" style="left:642.50px;top:584.25px;line-height:43px">CVE-2022-42004</span>
<div class="abs" style="left:851.25px;top:593.0px;width:28.750px;height:28.500px;background:#ff8c00"><svg class="abs" style="left:7.300px;top:6.600px;width:14.800px;height:15.300px" viewBox="0 0 14 14.500"><g fill="#595b60"><path d="M4.500 3a2.500 2.400 0 0 1 5 0z"/><path d="M3.500 4h3.200v8.800c-1.900-.2-3.200-1.800-3.200-3.600zM7.300 4h3.200v5.200c0 1.800-1.300 3.400-3.200 3.600z"/></g><g fill="none" stroke="#595b60" stroke-width="1.300"><path d="M3.700 5.700L1.400 3.700M10.300 5.700l2.300-2M3.700 8.100H0.500M10.300 8.100h3.200M3.900 10.400l-2.400 2.500M10.100 10.400l2.400 2.500"/></g></svg></div>
<span class="td" style="left:888.75px;top:584.25px;line-height:43px">HIGH</span>
<span class="td" style="left:1060.00px;top:584.25px;line-height:43px">General data-binding fun...</span>
<div class="abs" style="left:1256.500px;top:45.500px;width:7px;height:129px;border-radius:3.500px;background:#e3e4e6"></div>
</div>
<div class="abs" style="left:25px;top:996.300px;width:1390px;height:3px;background:#edeff6"></div>
<span class="abs" style="left:1345.500px;top:1006.600px;font-size:15px;line-height:26px;color:#303133">关闭</span>
</div>
<div class="abs" style="left:185px;top:1218px;width:2215px;height:1px;background:#4a4a4a"></div><div class="abs" style="left:125px;top:1218px;width:60px;height:1px;background:#858585"></div><div class="abs" style="left:2399px;top:0;width:1px;height:1219px;background:rgba(0,0,0,.13)"></div>
</body></html>
